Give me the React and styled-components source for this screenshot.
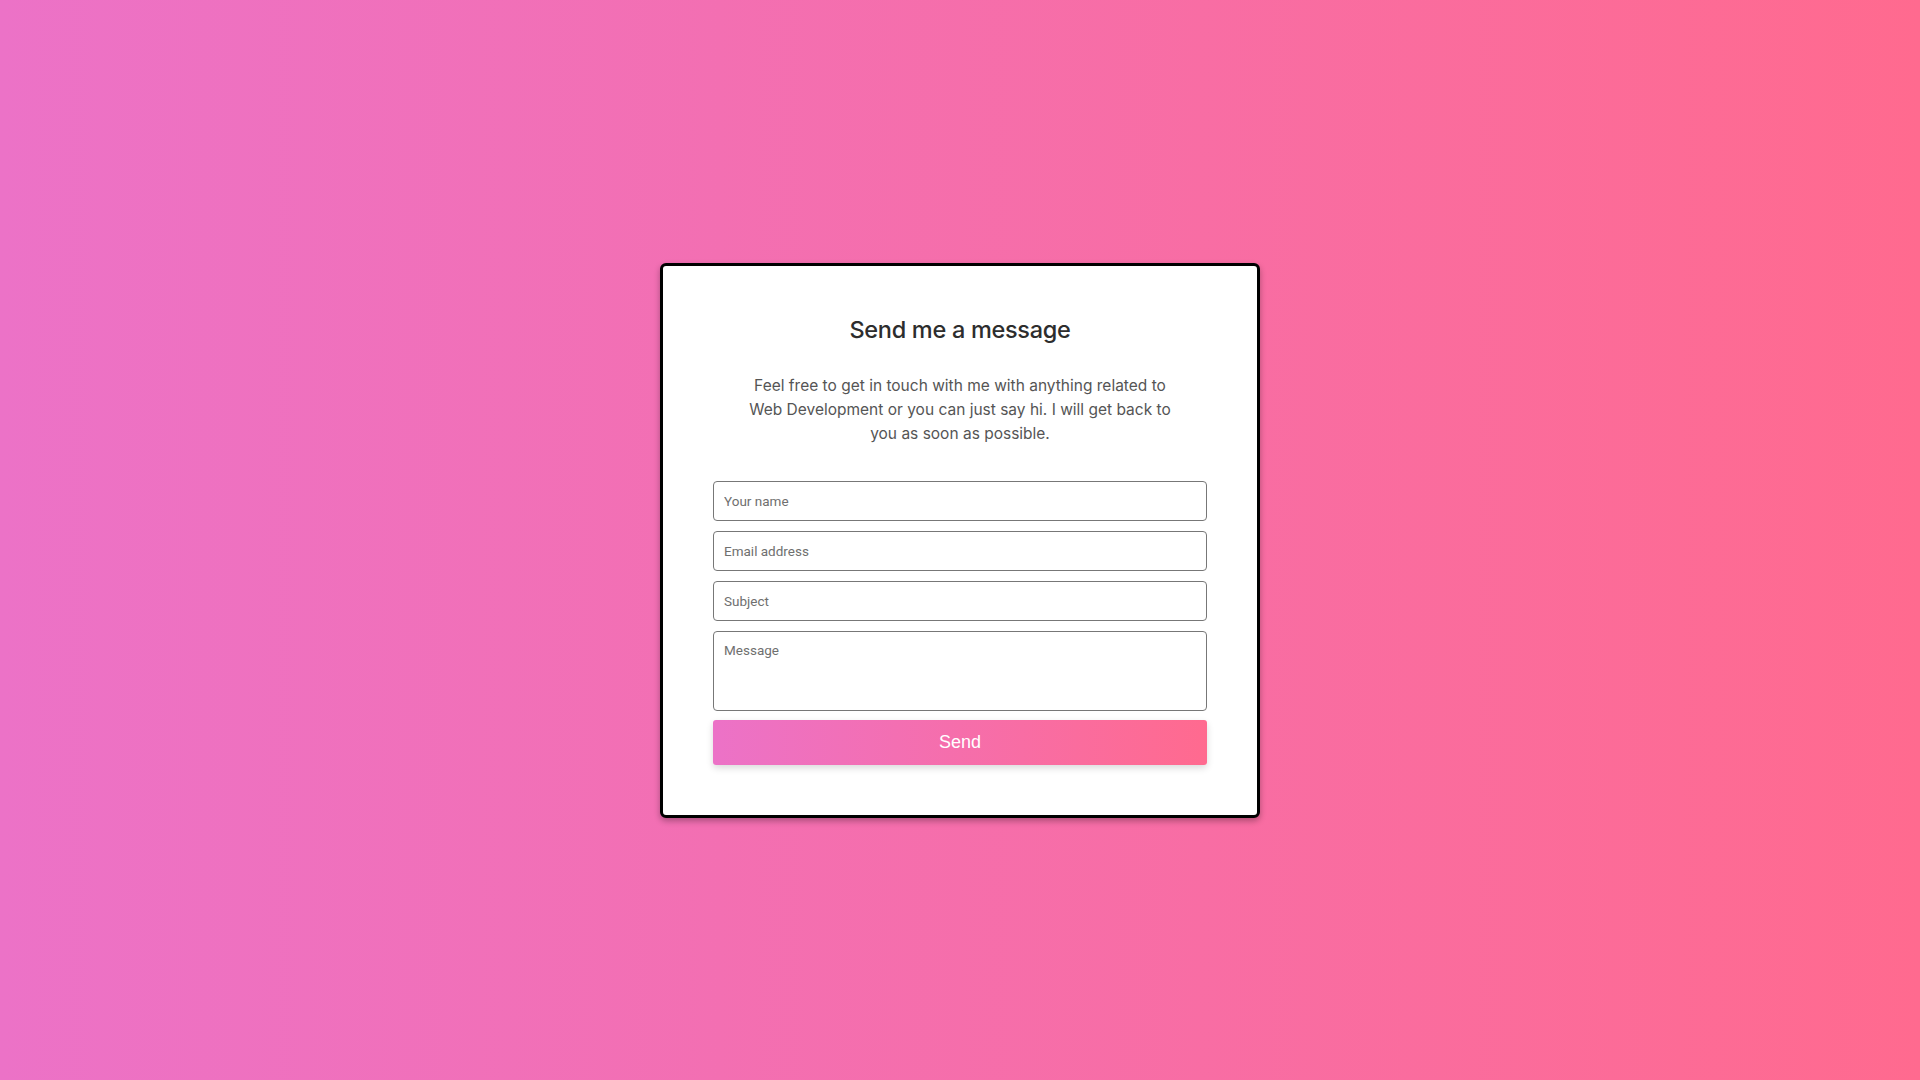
import React from 'react';
import styled, { createGlobalStyle } from 'styled-components';

const GlobalStyle = createGlobalStyle`
	* {
		box-sizing: border-box;
	}
	body {
		margin: 0;
		font-family: "Inter", "Roboto", sans-serif;
	}
`;

const Page = styled.div`
	min-height: 100vh;
	display: flex;
	align-items: center;
	justify-content: center;
	background: linear-gradient(90deg, #ec72c7 0%, #ff6a8f 100%);
`;

const Card = styled.div`
	width: 600px;
	background: #fff;
	border: 3px solid #000;
	border-radius: 6px;
	padding: 49px 50px 50px;
	box-shadow: 0 3px 6px rgba(0, 0, 0, 0.3);
	display: flex;
	flex-direction: column;
	align-items: center;
`;

const Title = styled.h2`
	margin: 0;
	font-size: 23.5px;
	line-height: 30px;
	font-weight: 500;
	color: #2d2d2d;
	letter-spacing: -0.3px;
`;

const Intro = styled.p`
	margin: 29px 0 35px;
	max-width: 440px;
	font-size: 15.5px;
	line-height: 24px;
	color: #555;
	text-align: center;
`;

const Form = styled.form`
	width: 100%;
	display: flex;
	flex-direction: column;
	gap: 10px;
`;

const Field = styled.input`
	width: 100%;
	height: 40px;
	padding: 0 10px;
	border: 1px solid #777;
	border-radius: 4px;
	font-family: "Roboto", "Liberation Sans", sans-serif;
	font-size: 13.5px;
	color: #333;
	outline: none;

	&::placeholder {
		color: #6f6f6f;
	}
`;

const MessageField = styled.textarea`
	width: 100%;
	height: 80px;
	padding: 10px 10px;
	border: 1px solid #777;
	border-radius: 4px;
	font-family: "Roboto", "Liberation Sans", sans-serif;
	font-size: 13.5px;
	resize: none;
	outline: none;

	&::placeholder {
		color: #6f6f6f;
	}
`;

const SendButton = styled.button`
	width: 100%;
	height: 45px;
	margin-top: -1px;
	border: none;
	border-radius: 3px;
	background: linear-gradient(90deg, #ec72c7 0%, #ff6a8f 100%);
	box-shadow: 0 3px 7px rgba(0, 0, 0, 0.15);
	color: #fff;
	font-family: "Liberation Sans", Arial, sans-serif;
	font-size: 18px;
	cursor: pointer;
`;

const App = () => {
	return (
		<>
			<GlobalStyle />
			<Page>
				<Card>
					<Title>Send me a message</Title>
					<Intro>
						Feel free to get in touch with me with anything related to Web Development or you can just say hi. I will get back to you as soon as possible.
					</Intro>
					<Form onSubmit={(e) => e.preventDefault()}>
						<Field type="text" placeholder="Your name" />
						<Field type="email" placeholder="Email address" />
						<Field type="text" placeholder="Subject" />
						<MessageField placeholder="Message" />
						<SendButton type="submit">Send</SendButton>
					</Form>
				</Card>
			</Page>
		</>
	);
};

export default App;
